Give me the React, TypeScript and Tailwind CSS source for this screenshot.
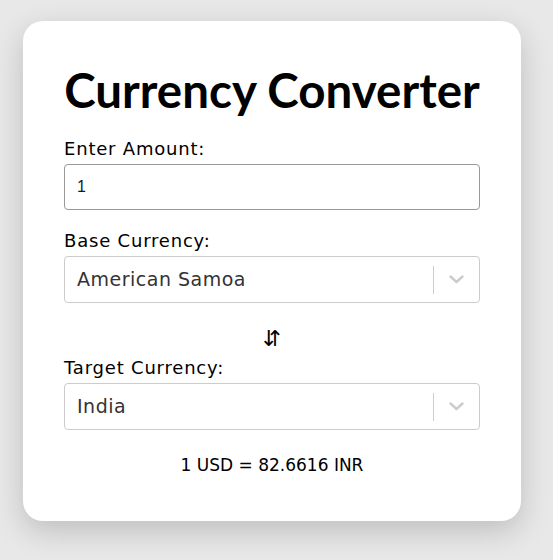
import { useState } from "react";

const countries = ["American Samoa", "India", "United States", "Japan"];

function CountrySelect({ value, onChange }: { value: string; onChange: (v: string) => void }) {
  return (
    <div className="relative flex h-[47px] items-center rounded-[4px] border border-[#cccccc] bg-white">
      <select
        value={value}
        onChange={(e) => onChange(e.target.value)}
        className="h-full w-full appearance-none bg-transparent pl-[12px] pr-[50px] text-[19px] tracking-[0.5px] text-[#333333] outline-none"
      >
        {countries.map((c) => (
          <option key={c}>{c}</option>
        ))}
      </select>
      <div className="pointer-events-none absolute right-0 top-0 flex h-full items-center">
        <span className="h-[28px] w-px bg-[#cccccc]" />
        <span className="flex w-[45px] justify-center">
          <svg width="15" height="9" viewBox="0 0 15 9" fill="none" stroke="#cccccc" strokeWidth="2.4" strokeLinecap="round" strokeLinejoin="round">
            <polyline points="1.5,1.5 7.5,7 13.5,1.5" />
          </svg>
        </span>
      </div>
    </div>
  );
}

export default function App() {
  const [amount, setAmount] = useState("1");
  const [base, setBase] = useState("American Samoa");
  const [target, setTarget] = useState("India");

  return (
    <div className="min-h-[560px] bg-[#e8e8e8] pl-[23px] pt-[21px] font-['DejaVu_Sans',sans-serif] text-black">
      <div className="flex w-[498px] flex-col rounded-[20px] bg-white px-[41px] pb-[44px] pt-[40px] shadow-[0_10px_30px_rgba(0,0,0,0.18)]">
        <h1 className="whitespace-nowrap text-center font-['Lato',sans-serif] text-[47.5px] font-bold leading-[58px]">
          Currency Converter
        </h1>

        <label className="mt-[18px] text-[18px] leading-[24px] tracking-[0.8px]">Enter Amount:</label>
        <input
          value={amount}
          onChange={(e) => setAmount(e.target.value)}
          className="mt-[3px] h-[46px] rounded-[4px] border border-[#999999] px-[12px] font-['Liberation_Sans',sans-serif] text-[16px] text-[#0a1a3a] outline-none"
        />

        <label className="mt-[19px] text-[18px] leading-[24px] tracking-[0.8px]">Base Currency:</label>
        <div className="mt-[3px]">
          <CountrySelect value={base} onChange={setBase} />
        </div>

        <div className="mt-[24px] flex justify-center text-[22px] leading-[24px]">
          <span>⇵</span>
        </div>

        <label className="mt-[5px] text-[18px] leading-[24px] tracking-[0.8px]">Target Currency:</label>
        <div className="mt-[3px]">
          <CountrySelect value={target} onChange={setTarget} />
        </div>

        <p className="mt-[23px] text-center text-[17px] leading-[24px]">1 USD = 82.6616 INR</p>
      </div>
    </div>
  );
}
